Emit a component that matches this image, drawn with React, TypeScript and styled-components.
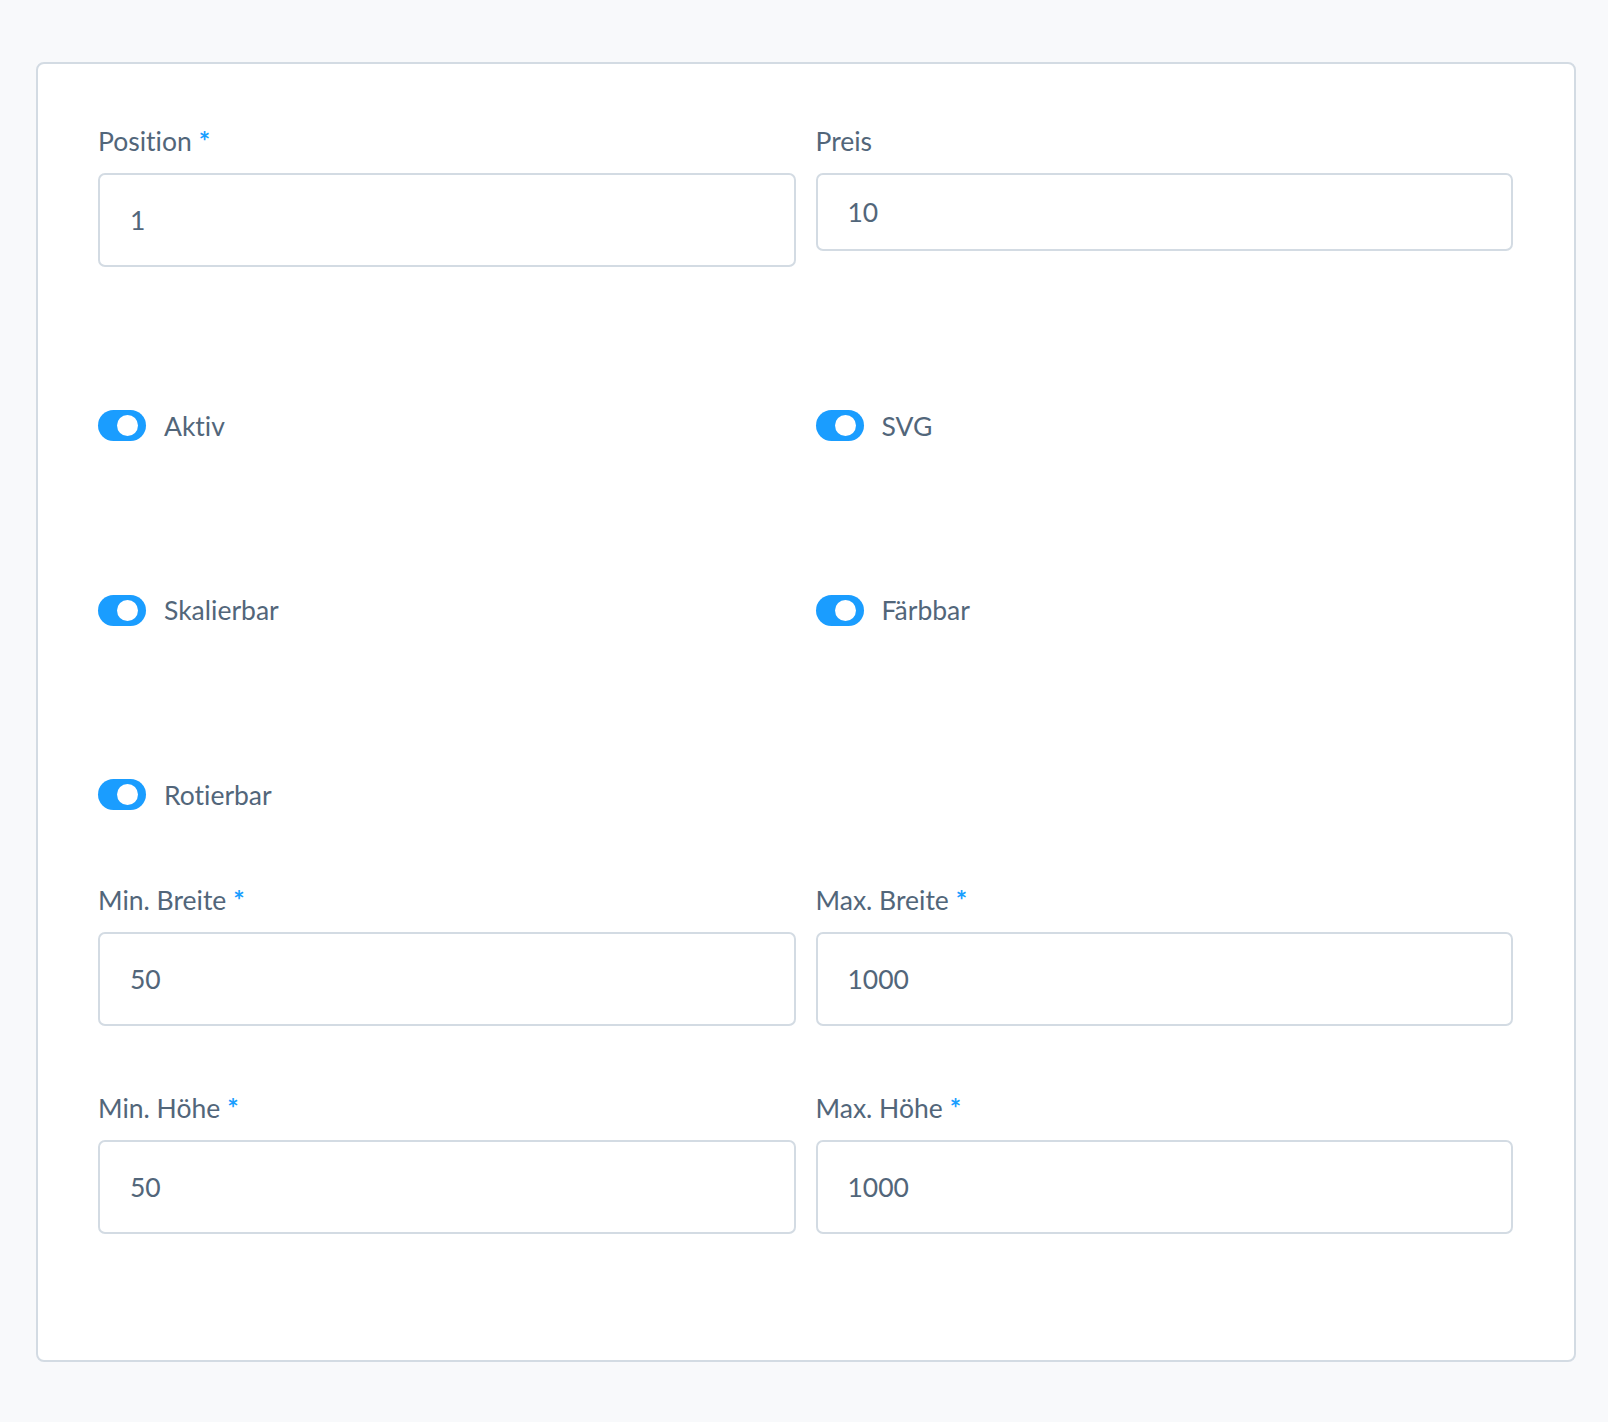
import React from "react";
import styled, { createGlobalStyle } from "styled-components";

const GlobalStyle = createGlobalStyle`
  html, body {
    margin: 0;
    padding: 0;
    background: #f8f9fb;
  }
  body {
    font-family: Lato, "Noto Sans", "Liberation Sans", sans-serif;
    font-variant-ligatures: none;
    color: #52667a;
  }
  * { box-sizing: border-box; }
`;

const Page = styled.div`
  padding: 62px 32px 60px 36px;
`;

const Card = styled.div`
  width: 1540px;
  height: 1300px;
  background: #ffffff;
  border: 2px solid #d3dbe3;
  border-radius: 8px;
  padding: 59px 61px 0 60px;
`;

const Row = styled.div<{ $top?: number }>`
  display: grid;
  grid-template-columns: 1fr 1fr;
  column-gap: 20px;
  align-items: start;
  margin-top: ${(p) => p.$top ?? 0}px;
`;

const ToggleGrid = styled.div<{ $top?: number }>`
  display: grid;
  grid-template-columns: 1fr 1fr;
  column-gap: 20px;
  row-gap: 153.5px;
  margin-top: ${(p) => p.$top ?? 0}px;
`;

const Field = styled.div`
  display: flex;
  flex-direction: column;
  gap: 14px;
`;

const Label = styled.label`
  display: block;
  height: 36px;
  font-size: 26.5px;
  line-height: 36px;
  color: #52667a;
  white-space: nowrap;
`;

const Required = styled.span`
  color: #189eff;
  font-size: 27px;
  font-weight: 700;
  margin-left: 7px;
`;

const Input = styled.input<{ $h: number }>`
  display: block;
  width: 100%;
  height: ${(p) => p.$h}px;
  border: 2px solid #d3dbe3;
  border-radius: 7px;
  padding: 0 0 0 30px;
  font-family: inherit;
  font-variant-ligatures: none;
  font-size: 26.5px;
  color: #52667a;
  background: #fff;
  outline: none;
`;

const ToggleRow = styled.div`
  display: flex;
  align-items: center;
  gap: 18px;
  height: 31px;
`;

const Switch = styled.span<{ $on: boolean }>`
  position: relative;
  display: inline-block;
  width: 48px;
  height: 31px;
  border-radius: 16px;
  background: ${(p) => (p.$on ? "#1a9dff" : "#d3dbe3")};
  flex-shrink: 0;
`;

const Knob = styled.span`
  position: absolute;
  top: 5px;
  right: 8px;
  width: 21px;
  height: 21px;
  border-radius: 50%;
  background: #ffffff;
`;

const ToggleText = styled.span`
  font-size: 26.5px;
  line-height: 36px;
  color: #52667a;
`;

function TextField({ label, value, required, h }: { label: string; value: string; required?: boolean; h: number }) {
  return (
    <Field>
      <Label>
        {label}
        {required && <Required>*</Required>}
      </Label>
      <Input $h={h} defaultValue={value} />
    </Field>
  );
}

function Toggle({ label }: { label: string }) {
  return (
    <ToggleRow>
      <Switch $on>
        <Knob />
      </Switch>
      <ToggleText>{label}</ToggleText>
    </ToggleRow>
  );
}

export default function App() {
  return (
    <>
      <GlobalStyle />
      <Page>
        <Card>
          <Row>
            <TextField label="Position" value="1" required h={94} />
            <TextField label="Preis" value="10" h={78} />
          </Row>
          <ToggleGrid $top={143}>
            <Toggle label="Aktiv" />
            <Toggle label="SVG" />
            <Toggle label="Skalierbar" />
            <Toggle label="Färbbar" />
            <Toggle label="Rotierbar" />
          </ToggleGrid>
          <Row $top={72}>
            <TextField label="Min. Breite" value="50" required h={94} />
            <TextField label="Max. Breite" value="1000" required h={94} />
          </Row>
          <Row $top={64}>
            <TextField label="Min. Höhe" value="50" required h={94} />
            <TextField label="Max. Höhe" value="1000" required h={94} />
          </Row>
        </Card>
      </Page>
    </>
  );
}
